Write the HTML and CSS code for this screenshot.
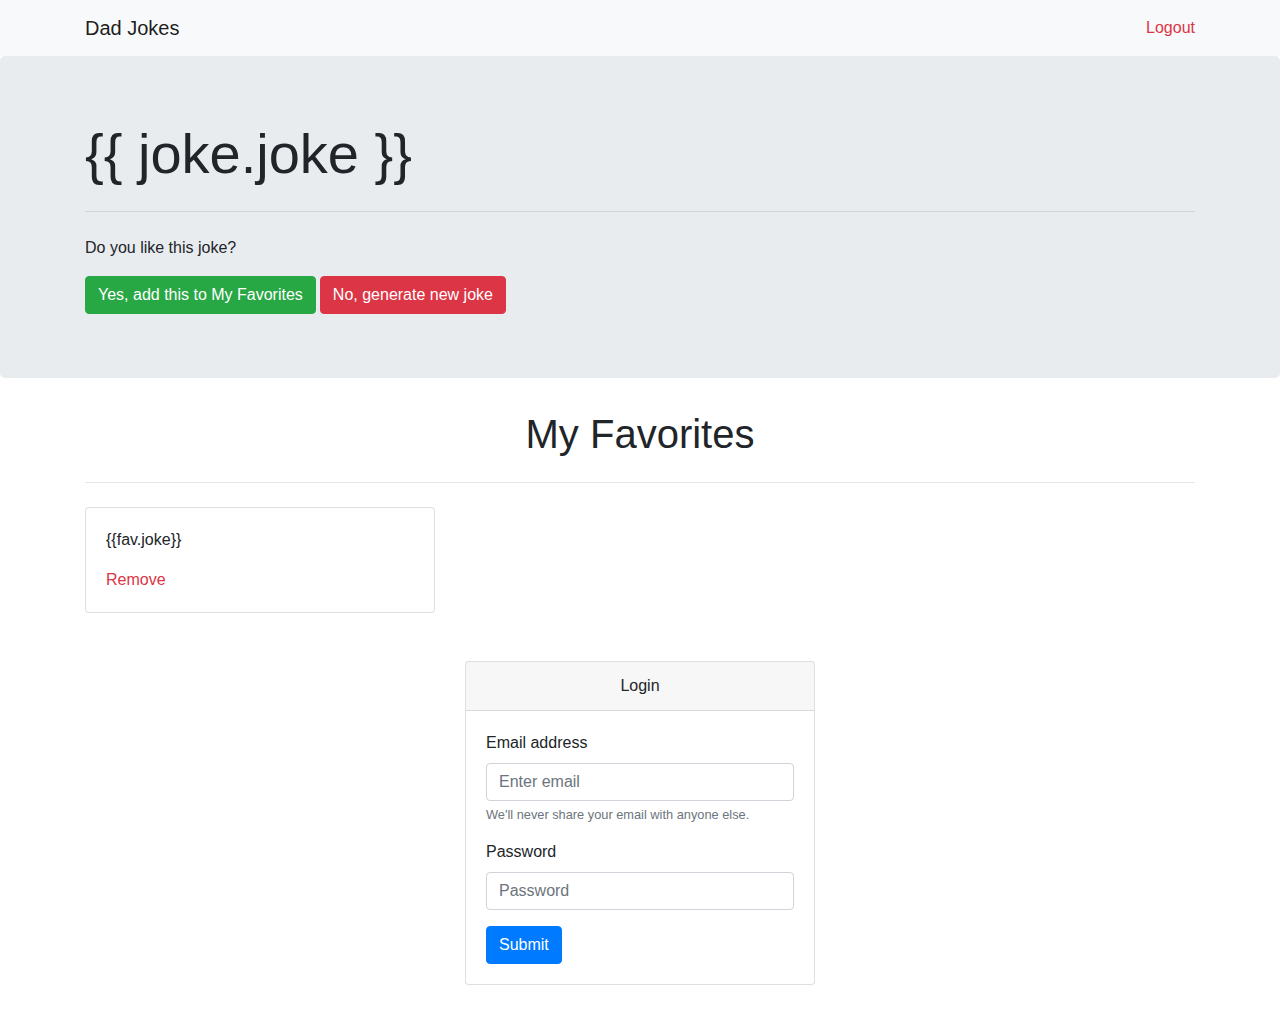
FILE: index.html
```html
<!DOCTYPE html>
<html lang="en">
<head>
<meta charset="utf-8">
<title>Dad Jokes</title>
<link rel="stylesheet" href="styles.css">
</head>
<body>
<nav class="navbar">
  <div class="container nav-inner">
    <a class="brand" href="#">Dad Jokes</a>
    <a class="logout" href="#">Logout</a>
  </div>
</nav>

<div class="jumbotron">
  <div class="container">
    <h1 class="display">{{ joke.joke }}</h1>
    <hr class="hr-jumbo">
    <p class="question">Do you like this joke?</p>
    <div class="actions">
      <a class="btn btn-success" href="#">Yes, add this to My Favorites</a>
      <a class="btn btn-danger" href="#">No, generate new joke</a>
    </div>
  </div>
</div>

<div class="container">
  <h1 class="section-title">My Favorites</h1>
  <hr class="hr-section">
  <div class="fav-grid">
    <div class="card">
      <div class="card-body">
        <p class="fav-text">{{fav.joke}}</p>
        <a class="remove" href="#">Remove</a>
      </div>
    </div>
  </div>

  <div class="login-wrap">
    <div class="card login-card">
      <div class="card-header">Login</div>
      <div class="card-body">
        <form>
          <div class="form-group">
            <label for="email">Email address</label>
            <input id="email" type="email" class="form-control" placeholder="Enter email">
            <small class="help">We'll never share your email with anyone else.</small>
          </div>
          <div class="form-group">
            <label for="pw">Password</label>
            <input id="pw" type="password" class="form-control" placeholder="Password">
          </div>
          <button type="submit" class="btn btn-primary">Submit</button>
        </form>
      </div>
    </div>
  </div>
</div>
</body>
</html>
```

FILE: styles.css
```css
* { box-sizing: border-box; }

html, body {
  margin: 0;
  padding: 0;
}

body {
  font-family: "Liberation Sans", Arial, Helvetica, sans-serif;
  font-size: 16px;
  line-height: 1.5;
  color: #212529;
  background: #fff;
}

a { text-decoration: none; }

.container {
  width: 1140px;
  margin: 0 auto;
  padding: 0 15px;
}

.navbar {
  background: #f8f9fa;
  padding: 8px 0;
}

.nav-inner {
  display: flex;
  align-items: center;
  justify-content: space-between;
}

.brand {
  font-size: 20px;
  line-height: 30px;
  padding: 5px 0;
  color: rgba(0, 0, 0, 0.9);
}

.logout {
  color: #dc3545;
  line-height: 24px;
}

.jumbotron {
  background: #e9ecef;
  border-radius: 4.8px;
  padding: 64px 0;
  margin-bottom: 32px;
}

.display {
  font-size: 56px;
  font-weight: 300;
  line-height: 1.2;
  margin: 0 0 8px;
}

hr {
  border: 0;
  border-top: 1px solid rgba(0, 0, 0, 0.1);
  height: 0;
}

.hr-jumbo { margin: 24px 0; }

.question { margin: 0 0 16px; }

.actions {
  display: flex;
  gap: 4px;
}

.btn {
  display: inline-block;
  font-size: 16px;
  line-height: 24px;
  padding: 6px 12px;
  border: 1px solid transparent;
  border-radius: 4px;
  color: #fff;
  font-family: inherit;
  cursor: pointer;
}

.btn-success { background: #28a745; border-color: #28a745; }
.btn-danger { background: #dc3545; border-color: #dc3545; }
.btn-primary { background: #007bff; border-color: #007bff; }

.section-title {
  font-size: 40px;
  font-weight: 500;
  line-height: 1.2;
  text-align: center;
  margin: 0 0 8px;
}

.hr-section { margin: 24px 0; }

.fav-grid {
  display: grid;
  grid-template-columns: repeat(3, 350px);
  gap: 30px;
}

.card {
  border: 1px solid rgba(0, 0, 0, 0.125);
  border-radius: 4px;
  background: #fff;
}

.card-body { padding: 20px; }

.fav-text { margin: 0 0 16px; }

.remove { color: #dc3545; }

.login-wrap {
  display: flex;
  justify-content: center;
  margin-top: 48px;
}

.login-card { width: 350px; }

.card-header {
  background: rgba(0, 0, 0, 0.03);
  border-bottom: 1px solid rgba(0, 0, 0, 0.125);
  padding: 12px 20px;
  text-align: center;
}

.form-group { margin-bottom: 16px; }

label {
  display: block;
  margin-bottom: 8px;
}

.form-control {
  display: block;
  width: 100%;
  height: 38px;
  padding: 6px 12px;
  font-family: inherit;
  font-size: 16px;
  line-height: 24px;
  color: #495057;
  background: #fff;
  border: 1px solid #ced4da;
  border-radius: 4px;
}

.form-control::placeholder { color: #6c757d; }

.help {
  display: block;
  margin-top: 4px;
  font-size: 12.8px;
  line-height: 19.2px;
  color: #6c757d;
}
```
